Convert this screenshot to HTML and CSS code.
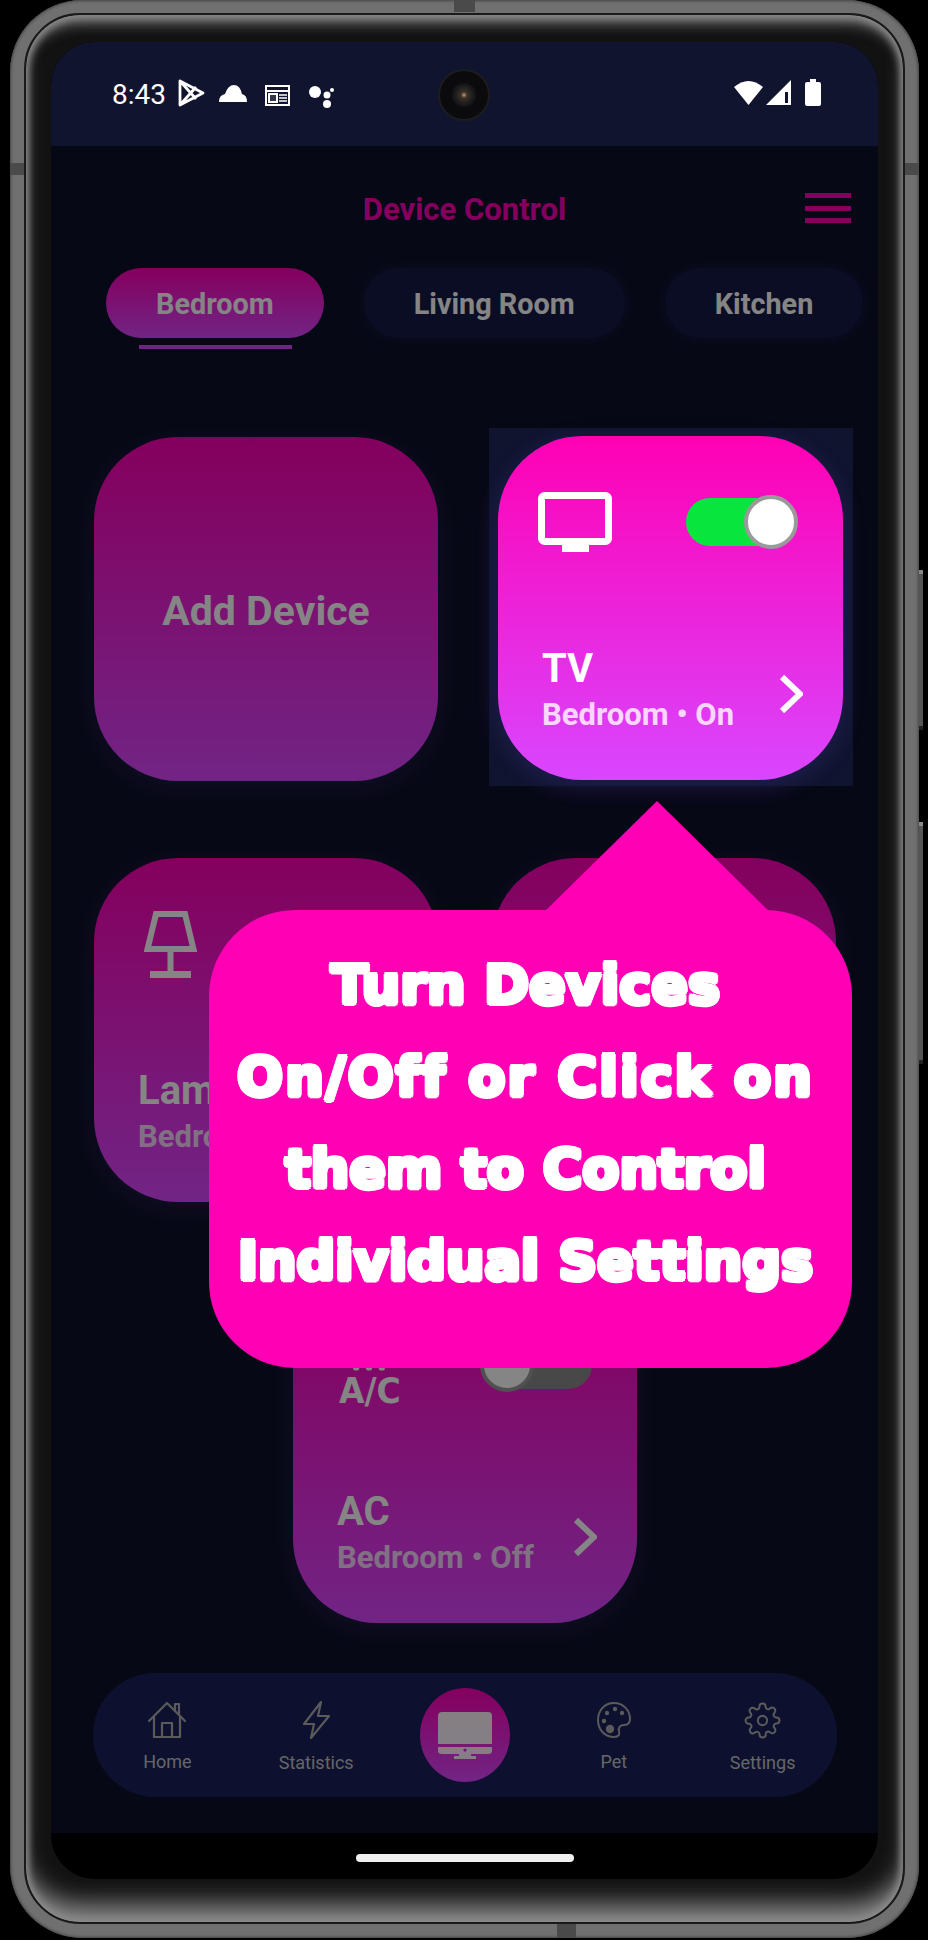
FILE: index.html
```html
<!DOCTYPE html>
<html>
<head lang="en">
    <meta charset="UTF-8">
    <title>Device Control</title>
    <link rel="stylesheet" href="styles.css">
</head>
<body>
<div class="phone">
    <span class="seam seam-top"></span>
    <span class="seam seam-bottom"></span>
    <span class="seam seam-left"></span>
    <span class="seam seam-right"></span>
    <span class="key key-power"></span>
    <span class="key key-volume"></span>
    <div class="bezel">
        <div class="screen">
            <div class="camera"><span></span></div>

            <div class="status">
                <div class="status-left">
                    <span class="time">8:43</span>
                    <svg width="27" height="28" viewBox="0 0 27 28" fill="none" stroke="#fff" stroke-width="2.8" stroke-linejoin="round"><path d="M2 2 L25 14 L2 26 Z M2 2 L18 20 M2 26 L18 8"/></svg>
                    <svg class="ic-cloud" width="28" height="17" viewBox="0 0 28 17" fill="#fff"><path d="M0 17 Q0 10 6 9 Q9 0 15 0 Q21 0 23 9 Q28 10 28 17 Z"/></svg>
                    <svg class="ic-news" width="25" height="22" viewBox="0 0 25 22" fill="none" stroke="#fff" stroke-width="2"><path d="M1 2 H24 V21 H1 Z"/><path d="M1 7 H24" stroke-width="2"/><path d="M4 10 H12 V18 H4 Z" fill="#fff" fill-opacity=".15"/><path d="M14 11 H22 M14 14 H22 M14 17 H22" stroke-width="1.5"/></svg>
                    <svg class="ic-dots" width="27" height="23" viewBox="0 0 27 23" fill="#fff"><circle cx="6" cy="7" r="6"/><circle cx="18" cy="10" r="3.5"/><circle cx="18" cy="19" r="4"/><circle cx="23" cy="5" r="2"/></svg>
                </div>
                <div class="status-right">
                    <svg width="29" height="25" viewBox="0 0 29 25" fill="#fff"><path d="M0 7 Q14.5 -5 29 7 L14.5 25 Z"/></svg>
                    <svg width="25" height="25" viewBox="0 0 25 25"><path d="M25 0 V25 H0 Z" fill="#fff"/><path d="M19 12 H22 V23 H19 Z" fill="#10142f"/></svg>
                    <svg class="ic-batt" width="16" height="27" viewBox="0 0 16 27" fill="#fff"><path d="M5 0 H11 V3 H14 Q16 3 16 5 V25 Q16 27 14 27 H2 Q0 27 0 25 V5 Q0 3 2 3 H5 Z"/></svg>
                </div>
            </div>

            <div class="app">
                <header class="head">
                    <span></span>
                    <h1>Device Control</h1>
                    <div class="burger"><i></i><i></i><i></i></div>
                </header>

                <div class="tabs">
                    <div class="tab current">Bedroom</div>
                    <div class="tab">Living Room</div>
                    <div class="tab">Kitchen</div>
                </div>

                <div class="grid">
                    <div class="card card-add">Add Device</div>
                    <div class="card"></div>

                    <div class="card">
                        <div class="card-top card-top-lamp">
                            <svg width="53" height="67" viewBox="0 0 53 67" fill="none" stroke="#fff" stroke-width="6"><path d="M12 3 H41 L49.5 38 H3.5 Z"/><path d="M26.5 40 V62"/><path d="M6 63.5 H47" stroke-width="7"/></svg>
                        </div>
                        <div class="card-foot">
                            <div>
                                <div class="card-name">Lamp</div>
                                <div class="card-sub">Bedroom • Off</div>
                            </div>
                        </div>
                    </div>
                    <div class="card"></div>

                    <div class="card card-ac">
                        <div class="card-top">
                            <div class="ac-icon">
                                <svg width="60" height="10" viewBox="0 0 60 10" fill="#fff"><circle cx="14" cy="3" r="4"/><circle cx="30" cy="3" r="4"/><circle cx="46" cy="3" r="4"/></svg>
                                <span>A/C</span>
                            </div>
                            <div class="switch"><span></span></div>
                        </div>
                        <div class="card-foot">
                            <div>
                                <div class="card-name">AC</div>
                                <div class="card-sub">Bedroom • Off</div>
                            </div>
                            <svg width="24" height="40" viewBox="0 0 24 40" fill="none" stroke="#fff" stroke-width="6"><path d="M3 3 L21 20 L3 37"/></svg>
                        </div>
                    </div>
                </div>

                <nav class="nav">
                    <div class="nav-item">
                        <svg width="38" height="36" viewBox="0 0 38 36" fill="none" stroke="#adadad" stroke-width="2.2" stroke-linejoin="round" stroke-linecap="round"><path d="M1 19 L19 1 L37 19"/><path d="M6 15 V35 H32 V15"/><path d="M14 35 V21 H24 V35"/><path d="M27 9 V2 H31 V13"/></svg>
                        <span>Home</span>
                    </div>
                    <div class="nav-item">
                        <svg width="29" height="38" viewBox="0 0 29 38" fill="none" stroke="#adadad" stroke-width="2.2" stroke-linejoin="round"><path d="M19 1 L2 23 H12 L9 37 L27 15 H16 Z"/></svg>
                        <span>Statistics</span>
                    </div>
                    <div class="nav-item nav-item-main">
                        <div class="nav-main">
                            <svg width="54" height="47" viewBox="0 0 54 47" fill="#fff" fill-opacity=".95"><path d="M4 0 H50 Q54 0 54 4 V32 H0 V4 Q0 0 4 0 Z"/><path fill-rule="evenodd" d="M0 35 H54 V39 Q54 42 50 42 H4 Q0 42 0 39 Z M27 36.5 a1.6 1.6 0 1 0 .01 0 Z"/><path d="M21 42 H33 V44 H38 V47 H16 V44 H21 Z"/></svg>
                        </div>
                    </div>
                    <div class="nav-item">
                        <svg width="34" height="36" viewBox="0 0 34 36" fill="none" stroke="#adadad" stroke-width="2"><path d="M17 1 C7 1 1 9 1 18 C1 28 8 35 17 35 C22 35 23 32 22 29 C21 26 23 23 27 23 C31 23 33 21 33 17 C33 8 26 1 17 1 Z"/><g fill="#adadad" stroke="none"><circle cx="10" cy="11" r="2.2"/><circle cx="18" cy="7" r="2.2"/><circle cx="25" cy="11" r="2.2"/><circle cx="7" cy="19" r="2.2"/><circle cx="13" cy="27" r="4.2"/></g></svg>
                        <span>Pet</span>
                    </div>
                    <div class="nav-item">
                        <svg width="37" height="37" viewBox="0 0 24 24" fill="none" stroke="#adadad" stroke-width="1.3" stroke-linejoin="round"><circle cx="12" cy="12" r="3"/><path d="M19.4 15a1.65 1.65 0 0 0 .33 1.82l.06.06a2 2 0 0 1 0 2.83 2 2 0 0 1-2.83 0l-.06-.06a1.65 1.65 0 0 0-1.82-.33 1.65 1.65 0 0 0-1 1.51V21a2 2 0 0 1-2 2 2 2 0 0 1-2-2v-.09A1.65 1.65 0 0 0 9 19.4a1.65 1.65 0 0 0-1.82.33l-.06.06a2 2 0 0 1-2.83 0 2 2 0 0 1 0-2.83l.06-.06a1.65 1.65 0 0 0 .33-1.82 1.65 1.65 0 0 0-1.51-1H3a2 2 0 0 1-2-2 2 2 0 0 1 2-2h.09A1.65 1.65 0 0 0 4.6 9a1.65 1.65 0 0 0-.33-1.82l-.06-.06a2 2 0 0 1 0-2.83 2 2 0 0 1 2.83 0l.06.06a1.65 1.65 0 0 0 1.82.33H9a1.65 1.65 0 0 0 1-1.51V3a2 2 0 0 1 2-2 2 2 0 0 1 2 2v.09a1.65 1.65 0 0 0 1 1.51 1.65 1.65 0 0 0 1.82-.33l.06-.06a2 2 0 0 1 2.83 0 2 2 0 0 1 0 2.83l-.06.06a1.65 1.65 0 0 0-.33 1.82V9a1.65 1.65 0 0 0 1.51 1H21a2 2 0 0 1 2 2 2 2 0 0 1-2 2h-.09a1.65 1.65 0 0 0-1.51 1z"/></svg>
                        <span>Settings</span>
                    </div>
                </nav>

                <!-- tutorial overlay -->
                <div class="scrim">
                    <div class="spot">
                        <div class="card card-on">
                            <div class="card-top">
                                <svg width="74" height="60" viewBox="0 0 74 60" fill="none" stroke="#fff" stroke-width="7"><rect x="3.5" y="3.5" width="67" height="46" rx="3"/><path d="M24 56.5 H51" stroke-width="7"/></svg>
                                <div class="switch on"><span></span></div>
                            </div>
                            <div class="card-foot">
                                <div>
                                    <div class="card-name">TV</div>
                                    <div class="card-sub">Bedroom • On</div>
                                </div>
                                <svg width="24" height="40" viewBox="0 0 24 40" fill="none" stroke="#fff" stroke-width="6"><path d="M3 3 L21 20 L3 37"/></svg>
                            </div>
                        </div>
                    </div>
                    <div class="tip-arrow"></div>
                    <div class="tip">Turn Devices<br><span class="tip-wide">On/Off or Click on</span><br>them to Control<br>Individual Settings</div>
                </div>
            </div>

            <div class="gesture"><span></span></div>
        </div>
    </div>
</div>
</body>
</html>
```
FILE: styles.css
```css
* {
    padding: 0;
    margin: 0;
    box-sizing: border-box;
}

body {
    background: #000;
    font-family: Roboto, "Liberation Sans", sans-serif;
    width: 928px;
    height: 1940px;
    overflow: hidden;
}

/* phone frame */
.phone {
    position: relative;
    width: 909px;
    height: 1938px;
    margin-left: 10px;
    padding: 13px 14px 14px 14px;
    border-radius: 72px;
    background: #707070;
    box-shadow: inset 0 0 3px 1px #444;
}

.bezel {
    height: 1911px;
    padding: 29px 26px 41px 27px;
    border: 2px solid #1a1a1a;
    border-radius: 56px;
    background: #121212;
    box-shadow: inset 0 0 7px 3px #8a8a8a, inset 0 -26px 24px -8px #8a8a8a, inset 0 16px 14px -8px #777;
}

.seam {
    position: absolute;
    background: #4a4a4a;
}

.seam-top {
    left: 444px;
    top: 0;
    width: 21px;
    height: 12px;
}

.seam-bottom {
    left: 547px;
    bottom: 0;
    width: 19px;
    height: 14px;
}

.seam-left {
    left: 0;
    top: 163px;
    width: 14px;
    height: 12px;
}

.seam-right {
    right: 0;
    top: 163px;
    width: 14px;
    height: 12px;
}

.key {
    position: absolute;
    left: 909px;
    width: 4px;
    background: #555;
    border-top: 4px solid #888;
    border-bottom: 4px solid #222;
}

.key-power {
    top: 570px;
    height: 160px;
}

.key-volume {
    top: 822px;
    height: 242px;
}

.screen {
    position: relative;
    height: 100%;
    margin: -2px -1px 0 -2px;
    border-radius: 44px;
    background: #000;
    overflow: hidden;
    display: flex;
    flex-direction: column;
}

.camera {
    position: absolute;
    left: 387px;
    top: 27px;
    width: 52px;
    height: 52px;
    border-radius: 50%;
    background: #0b0b0d;
    border: 2px solid #1d1d20;
    display: flex;
    align-items: center;
    justify-content: center;
}

.camera span {
    width: 24px;
    height: 24px;
    border-radius: 50%;
    background: radial-gradient(circle, #c89a6a 0, #3a3226 18%, #17161a 60%, #0b0b0d 100%);
}

/* status bar */
.status {
    height: 104px;
    flex: none;
    background: #10142f;
    display: flex;
    justify-content: space-between;
    padding: 37px 57px 0 61px;
}

.status-left {
    display: flex;
    align-items: flex-start;
    height: 30px;
}

.time {
    color: #fff;
    font-size: 28px;
    line-height: 32px;
    width: 66px;
}

.ic-cloud {
    margin: 6px 0 0 14px;
}

.ic-news {
    margin: 5px 0 0 18px;
}

.ic-dots {
    margin: 6px 0 0 19px;
}

.status-right {
    display: flex;
    align-items: flex-start;
    gap: 3px;
    height: 30px;
    padding-top: 1px;
}

.ic-batt {
    margin: -1px 0 0 11px;
}

/* app */
.app {
    position: relative;
    flex: none;
    height: 1687px;
    background: #0f1129;
    overflow: hidden;
}

.head {
    display: grid;
    grid-template-columns: 1fr auto 1fr;
    align-items: center;
    padding: 45px 27px 0;
}

.head h1 {
    color: #ff00b4;
    font-size: 31px;
    font-weight: 700;
    line-height: 34px;
    padding-top: 2px;
}

.burger {
    justify-self: end;
    width: 46px;
    margin-bottom: 2px;
}

.burger i {
    display: block;
    height: 5px;
    margin-bottom: 7.5px;
    background: #ff00b4;
}

.burger i:last-child {
    margin-bottom: 0;
}

.tabs {
    display: flex;
    gap: 40px;
    margin-top: 41px;
    padding-left: 55px;
}

.tab {
    position: relative;
    height: 70px;
    line-height: 73px;
    padding: 0 50px;
    border-radius: 35px;
    background: #141946;
    box-shadow: 0 0 14px #141946;
    color: #fff;
    font-size: 28.8px;
    font-weight: 700;
    white-space: nowrap;
}

.tab.current {
    background: linear-gradient(180deg, #ff00b4, #d946ff);
    box-shadow: none;
}

.tab.current::after {
    content: "";
    position: absolute;
    left: 33px;
    right: 32px;
    bottom: -11px;
    height: 4px;
    background: #d946ff;
}

.grid {
    display: grid;
    grid-template-columns: 344px 344px;
    column-gap: 54px;
    row-gap: 77px;
    margin-top: 99px;
    padding-left: 43px;
}

.card {
    width: 344px;
    height: 344px;
    border-radius: 84px;
    background: linear-gradient(180deg, #ff00b4, #d946ff);
    box-shadow: 0 6px 24px rgba(120, 90, 255, .16);
    padding: 56px 44px 47px;
    display: flex;
    flex-direction: column;
    justify-content: space-between;
    color: #fff;
}

.card-add {
    align-items: center;
    justify-content: center;
    font-size: 41px;
    font-weight: 700;
    padding: 3px 0 0;
}

.card-ac {
    grid-column: 1 / span 2;
    justify-self: center;
}

.card-ac .card-top {
    align-items: flex-start;
}

.card-ac .switch {
    margin-top: 6px;
}

.card-top {
    display: flex;
    justify-content: space-between;
    align-items: center;
}

.card-top-lamp {
    padding-left: 6px;
    margin-top: -3px;
}

.card-foot {
    display: flex;
    justify-content: space-between;
    align-items: flex-end;
}

.card-foot svg {
    margin: 0 -4px 19px 0;
}

.card-name {
    font-size: 40px;
    font-weight: 700;
    line-height: 46px;
}

.card-sub {
    margin-top: 5px;
    font-size: 31px;
    font-weight: 700;
    line-height: 36px;
    opacity: .8;
}

.ac-icon {
    display: flex;
    flex-direction: column;
    align-items: flex-start;
    margin-left: 2px;
    height: 74px;
}

.ac-icon svg {
    margin-top: 30px;
}

.ac-icon span {
    font-family: "DejaVu Sans", sans-serif;
    font-size: 33px;
    font-weight: 700;
    line-height: 36px;
    transform: scaleY(1.1);
}

.switch {
    position: relative;
    width: 110px;
    height: 48px;
    border-radius: 24px;
    margin-right: 1px;
    background: #8a8a8a;
}

.switch span {
    position: absolute;
    left: -2px;
    top: -3px;
    width: 54px;
    height: 54px;
    border-radius: 50%;
    background: #fff;
    border: 4px solid #9a9a9a;
}

.switch.on {
    margin-right: 3px;
    background: #08e63d;
}

.switch.on span {
    left: auto;
    right: -2px;
}

/* bottom nav */
.nav {
    display: grid;
    grid-template-columns: repeat(5, 1fr);
    align-items: center;
    height: 124px;
    margin: 50px 0 0 42px;
    width: 744px;
    border-radius: 62px;
    background: #1a2058;
}

.nav-item {
    display: flex;
    flex-direction: column;
    align-items: center;
    height: 100%;
    justify-content: center;
    gap: 13px;
    padding-top: 5px;
    color: #c4c4c4;
    font-size: 18px;
    line-height: 22px;
}

.nav-item-main {
    padding-top: 0;
}

.nav-main {
    width: 90px;
    height: 94px;
    border-radius: 50%;
    background: linear-gradient(180deg, #ff00b4, #d946ff);
    display: flex;
    align-items: center;
    justify-content: center;
}

/* tutorial overlay */
.scrim {
    position: absolute;
    left: 0;
    top: 0;
    right: 0;
    bottom: 0;
    background: rgba(0, 0, 0, .48);
}

.spot {
    position: absolute;
    left: 438px;
    top: 282px;
    width: 364px;
    height: 358px;
    padding: 8px 0 0 9px;
    background: #10142f;
}

.card-on {
    width: 345px;
    padding-left: 40px;
}

.card-on .card-name,
.card-on .card-sub {
    margin-left: 4px;
}

.tip-arrow {
    position: absolute;
    left: 489px;
    top: 655px;
    width: 234px;
    height: 115px;
    background: #ff00b4;
    clip-path: polygon(50% 0, 100% 100%, 0 100%);
}

.tip {
    position: absolute;
    left: 158px;
    top: 764px;
    width: 643px;
    height: 458px;
    padding: 29px 10px 0 0;
    border-radius: 86px;
    background: #ff00b4;
    color: #fff;
    font-family: "DejaVu Sans", sans-serif;
    font-size: 54px;
    font-weight: 700;
    line-height: 92px;
    text-align: center;
    white-space: nowrap;
    text-shadow: 2.5px 0 #fff, -2.5px 0 #fff, 0 2.5px #fff, 0 -2.5px #fff, 1.8px 1.8px #fff, -1.8px 1.8px #fff, 1.8px -1.8px #fff, -1.8px -1.8px #fff;
}

.tip-wide {
    letter-spacing: 2.2px;
}

.gesture {
    flex: 1;
    display: flex;
    justify-content: center;
    padding-top: 21px;
}

.gesture span {
    width: 218px;
    height: 8px;
    border-radius: 4px;
    background: #f0f0f0;
}
```
